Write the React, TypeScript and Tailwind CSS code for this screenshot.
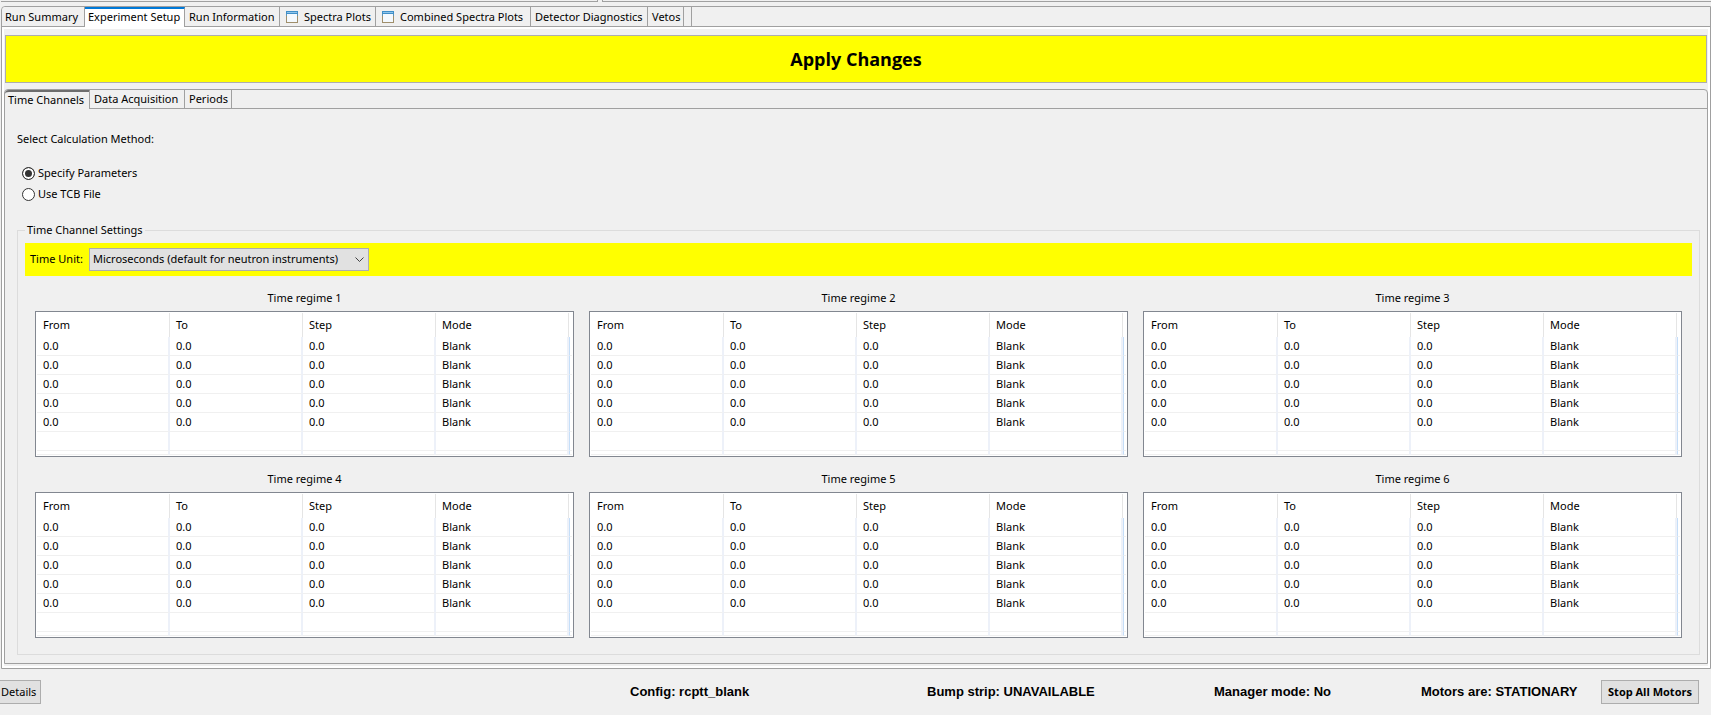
import { useState } from 'react';
import type { ReactNode } from 'react';

const COLUMNS = ['From', 'To', 'Step', 'Mode'];
const ROWS = Array.from({ length: 5 }, () => ['0.0', '0.0', '0.0', 'Blank']);
const REGIMES = [1, 2, 3, 4, 5, 6];

function WindowIcon() {
  return (
    <svg width="12" height="12" viewBox="0 0 12 12" shapeRendering="crispEdges" aria-hidden="true">
      <rect width="12" height="12" fill="#a08f6b" />
      <rect x="1" y="3" width="10" height="8" fill="#f4f9fe" />
      <rect width="12" height="3" fill="#3f8fc9" />
      <rect x="1" y="1" width="10" height="1" fill="#8ec4ea" />
      <rect x="0" y="3" width="1" height="2" fill="#5f93b4" />
      <rect x="11" y="3" width="1" height="2" fill="#5f93b4" />
    </svg>
  );
}

interface TabProps {
  children?: ReactNode;
  className: string;
}

function Tab({ children, className }: TabProps) {
  return (
    <button
      type="button"
      role="tab"
      className={`flex shrink-0 items-center whitespace-nowrap border-r border-[#a0a0a0] ${className}`}
    >
      {children}
    </button>
  );
}

function RegimeTable({ index }: { index: number }) {
  const id = `regime-${index}`;
  return (
    <section>
      <h3 id={id} className="text-center leading-4">
        Time regime {index}
      </h3>
      <div className="mt-[5px] h-[146px] overflow-hidden border border-[#828790] bg-white p-px">
        <table aria-labelledby={id} className="w-full table-fixed border-separate border-spacing-0 text-left">
          <colgroup>
            <col />
            <col />
            <col />
            <col />
            <col className="w-[3px]" />
          </colgroup>
          <thead>
            <tr className="h-6">
              {COLUMNS.map((name) => (
                <th key={name} scope="col" className="border-r border-[#e5e5e5] p-0 pl-1.5 font-normal">
                  {name}
                </th>
              ))}
              <td className="p-0" />
            </tr>
          </thead>
          <tbody>
            {ROWS.map((row, r) => (
              <tr key={r} className="h-[19px]">
                {row.map((value, c) => (
                  <td
                    key={c}
                    className="border-r-2 border-b border-r-[#edf1f9] border-b-[#f0f0f0] p-0 pl-1.5 leading-4"
                  >
                    {value}
                  </td>
                ))}
                <td className="border-b border-l border-b-[#f0f0f0] border-l-[#c5def8] p-0" />
              </tr>
            ))}
            {['h-[19px]', 'h-1'].map((height) => (
              <tr key={height} className={height}>
                {COLUMNS.map((name) => (
                  <td key={name} className="border-r-2 border-b border-r-[#edf1f9] border-b-[#f0f0f0] p-0" />
                ))}
                <td className="border-b border-l border-b-[#f0f0f0] border-l-[#c5def8] p-0" />
              </tr>
            ))}
          </tbody>
        </table>
      </div>
    </section>
  );
}

function MethodOption({
  label,
  checked,
  onSelect,
}: {
  label: string;
  checked: boolean;
  onSelect: () => void;
}) {
  return (
    <label className="flex h-[21px] items-center gap-[3px]">
      <input
        type="radio"
        name="method"
        checked={checked}
        onChange={onSelect}
        className="size-[13px] appearance-none rounded-full border border-[#333] bg-white checked:bg-[#333] checked:shadow-[inset_0_0_0_2px_white]"
      />
      {label}
    </label>
  );
}

export default function App() {
  const [method, setMethod] = useState('parameters');

  return (
    <div className="min-h-screen bg-[#f0f0f0] font-['Noto_Sans',sans-serif] text-[11px] text-black">
      <div className="flex h-1.5 gap-1">
        <div className="ml-px h-0.5 w-[597px] border-r border-b border-[#a0a0a0]" />
        <div className="h-0.5 flex-1 border-b border-l border-[#a0a0a0]" />
      </div>

      <main className="ml-px rounded-tl border border-[#a0a0a0] bg-white">
        <div role="tablist" className="flex h-5 rounded-tl bg-[#f0f0f0] shadow-[inset_0_-1px_0_#a0a0a0]">
          <Tab className="w-[83px] border-b pt-px pl-[3px]">Run Summary</Tab>
          <Tab className="w-[100px] border-t-2 border-t-[#0078d7] bg-white pb-0.5 pl-[3px]">Experiment Setup</Tab>
          <Tab className="w-[95px] border-b pt-px pl-1">Run Information</Tab>
          <Tab className="w-24 gap-1.5 border-b pt-px pl-1.5">
            <WindowIcon />
            Spectra Plots
          </Tab>
          <Tab className="w-[155px] gap-1.5 border-b pt-px pl-1.5">
            <WindowIcon />
            Combined Spectra Plots
          </Tab>
          <Tab className="w-[117px] border-b pt-px pl-1">Detector Diagnostics</Tab>
          <Tab className="w-9 border-b pt-px pl-1">Vetos</Tab>
          <Tab className="w-2 border-b" />
        </div>

        <div className="mx-0.5 mt-0.5 mb-0.5 bg-[#f0f0f0] pt-1.5 pb-0.5">
          <div className="px-px">
            <button
              type="button"
              className="block h-12 w-full border border-[#adadad] bg-[#ffff00] font-['Open_Sans',sans-serif] text-[18px] font-bold"
            >
              Apply Changes
            </button>
          </div>

          <div className="mt-1.5 rounded-t border border-[#a0a0a0]">
            <div role="tablist" className="flex h-[19px] shadow-[inset_0_-1px_0_#a0a0a0]">
              <Tab className="w-[85px] rounded-tl border-t-2 border-t-[#6d6d6d] bg-[#f0f0f0] pb-px pl-[3px]">
                Time Channels
              </Tab>
              <Tab className="w-[95px] border-b pt-px pl-1">Data Acquisition</Tab>
              <Tab className="w-[47px] border-b pt-px pl-1">Periods</Tab>
            </div>

            <div className="pt-[22px] pr-[7px] pb-2 pl-3">
              <div role="radiogroup" aria-labelledby="method-title">
                <h2 id="method-title" className="leading-4">
                  Select Calculation Method:
                </h2>
                <div className="mt-4 flex flex-col items-start pl-[5px]">
                  <MethodOption
                    label="Specify Parameters"
                    checked={method === 'parameters'}
                    onSelect={() => setMethod('parameters')}
                  />
                  <MethodOption label="Use TCB File" checked={method === 'file'} onSelect={() => setMethod('file')} />
                </div>
              </div>

              <fieldset className="mt-[17px] border border-[#dcdcdc] px-[7px] pt-[5px] pb-4">
                <legend className="px-0.5 leading-4">Time Channel Settings</legend>
                <div className="flex h-[33px] items-center bg-[#ffff00] pl-[5px]">
                  <label htmlFor="unit" className="w-[59px]">
                    Time Unit:
                  </label>
                  <div className="relative">
                    <select
                      id="unit"
                      className="block h-[23px] w-[280px] appearance-none border border-[#adadad] bg-[#e1e1e1] pl-[3px]"
                    >
                      <option>Microseconds (default for neutron instruments)</option>
                      <option>Nanoseconds</option>
                    </select>
                    <svg
                      className="pointer-events-none absolute top-2 right-[5px]"
                      width="9"
                      height="7"
                      viewBox="0 0 9 7"
                      fill="none"
                      stroke="#404040"
                      aria-hidden="true"
                    >
                      <path d="M0.5 1.5 4.5 5.5 8.5 1.5" />
                    </svg>
                  </div>
                </div>
                <div className="mt-[14px] grid grid-cols-3 gap-x-[15px] gap-y-[14px] px-[10px]">
                  {REGIMES.map((index) => (
                    <RegimeTable key={index} index={index} />
                  ))}
                </div>
              </fieldset>
            </div>
          </div>
        </div>
      </main>

      <footer className="mt-[11px] grid grid-cols-[630fr_297fr_287fr_207fr_180fr_110fr] items-center pb-1 font-['Liberation_Sans',Arial,sans-serif] text-[13px] font-bold whitespace-nowrap">
        <div>
          <button
            type="button"
            className="h-6 w-[41px] border border-l-0 border-[#adadad] bg-[#e1e1e1] pl-px text-left font-['Noto_Sans',sans-serif] text-[11px] font-normal"
          >
            Details
          </button>
        </div>
        <p>Config: rcptt_blank</p>
        <p>Bump strip: UNAVAILABLE</p>
        <p>Manager mode: No</p>
        <p>Motors are: STATIONARY</p>
        <div>
          <button
            type="button"
            className="h-6 w-[98px] border border-[#adadad] bg-[#e1e1e1] font-['Open_Sans',sans-serif] text-[11px] font-bold"
          >
            Stop All Motors
          </button>
        </div>
      </footer>
    </div>
  );
}
